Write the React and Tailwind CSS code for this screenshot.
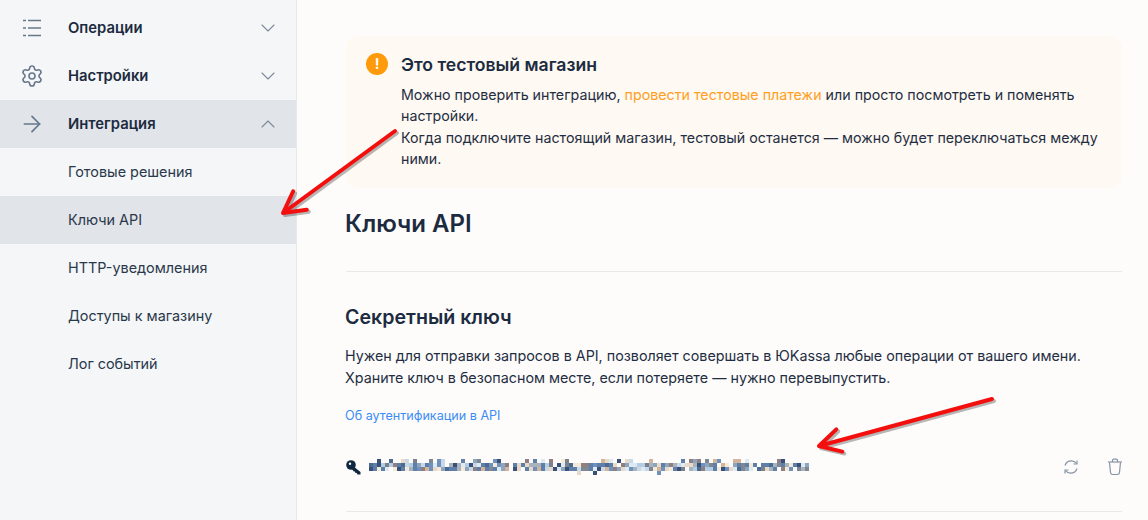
import React from "react";
import { ChevronDown, ChevronUp, Settings, ArrowRight } from "lucide-react";

function ListIcon() {
  return (
    <svg width="20" height="20" viewBox="0 0 20 20" fill="none" stroke="#68778d" strokeWidth="1.6" className="ml-[22px]">
      <path d="M1 2.500H4M1 10H4M1 17.500H4M6 2.500H19M6 10H19M6 17.500H19" />
    </svg>
  );
}

function NavRow({ icon, label, open, active }) {
  return (
    <div className={"flex h-12 items-center " + (active ? "bg-[#e1e4e8]" : "")}>
      <div className="flex w-[68px] shrink-0 items-center">{icon}</div>
      <span className="flex-1 text-[14.800px] font-semibold text-[#1c2b40]">{label}</span>
      {open ? (
        <ChevronUp size={24} strokeWidth={1.1} color="#7d8a9c" className="mr-[16px]" />
      ) : (
        <ChevronDown size={24} strokeWidth={1.1} color="#7d8a9c" className="mr-[16px]" />
      )}
    </div>
  );
}

function SubRow({ label, active }) {
  return (
    <div className={"flex h-12 items-center pl-[68px] text-[14.400px] text-[#2a384c] " + (active ? "bg-[#e1e4e8]" : "")}>
      {label}
    </div>
  );
}

function KeyBlur() {
  const palette = ["#5f7fa8", "#5f7fa8", "#8ea5c0", "#c9d8e6", "#e9d9c8", "#d4b59c", "#7c7f8c", "#4b6a94", "#b4cde2", "#dcebf3", "#f3ead9", "#8f7f80", "#3a5078", "#a9b3bd", "#6f91bd", "#7e8794"];
  const rects = [];
  let s = 12345;
  const next = () => {
    s ^= s << 13;
    s ^= s >>> 17;
    s ^= s << 5;
    s >>>= 0;
    return s / 4294967296;
  };
  for (let c = 0; c < 110; c++) {
    for (let r = 0; r < 4; r++) {
      const p = r === 1 || r === 2 ? 0.93 : r === 0 ? 0.36 : 0.05;
      const v = next();
      const col = palette[Math.floor(next() * palette.length)];
      if (v < p) rects.push(<rect key={c + "-" + r} x={c * 4} y={r * 4} width="4" height="4" fill={col} />);
    }
  }
  return (
    <svg width="440" height="16" viewBox="0 0 440 16" shapeRendering="crispEdges" className="ml-[8px]">
      {rects}
    </svg>
  );
}

function Arrow({ x1, y1, x2, y2 }) {
  const a = Math.atan2(y1 - y2, x1 - x2);
  const len = 24;
  const sp = 0.5;
  const p1 = [x2 + len * Math.cos(a + sp), y2 + len * Math.sin(a + sp)];
  const p2 = [x2 + len * Math.cos(a - sp), y2 + len * Math.sin(a - sp)];
  const d = `M${x1} ${y1}L${x2} ${y2}M${p1[0]} ${p1[1]}L${x2} ${y2}L${p2[0]} ${p2[1]}`;
  return (
    <g fill="none" strokeLinecap="round" strokeLinejoin="round" strokeWidth="4">
      <path d={d} stroke="#000" opacity="0.28" transform="translate(2 2)" />
      <path d={d} stroke="#f40f0f" />
    </g>
  );
}

export default function App() {
  return (
    <div className="relative flex h-[520px] w-[1148px] overflow-hidden bg-[#fdfcfb] font-['Inter',sans-serif]">
      <aside className="w-[297px] shrink-0 border-r border-[#e8e9eb] bg-[#f4f6f7] pt-1">
        <NavRow icon={<ListIcon />} label="Операции" />
        <NavRow icon={<Settings size={24} strokeWidth={1.6} color="#68778d" className="ml-[20px]" />} label="Настройки" />
        <NavRow active open icon={<ArrowRight size={26} strokeWidth={1.6} color="#68778d" className="ml-[19px]" />} label="Интеграция" />
        <SubRow label="Готовые решения" />
        <SubRow active label="Ключи API" />
        <SubRow label="HTTP-уведомления" />
        <SubRow label="Доступы к магазину" />
        <SubRow label="Лог событий" />
      </aside>
      <main className="flex-1 pl-[48px] pr-[26px] pt-9 text-[#1c2b40]">
        <div className="ml-px flex h-[152px] rounded-xl bg-[#fef9f2] pl-5 pt-[17px]">
          <div className="flex h-[22px] w-[22px] shrink-0 items-center justify-center rounded-full bg-[#ff9a0a] text-[14px] font-bold leading-none text-white">!</div>
          <div className="ml-[13px] w-[705px]">
            <div className="text-[17.600px] font-semibold leading-6">Это тестовый магазин</div>
            <div className="mt-[7px] text-[14.250px] leading-[21.330px] text-[#1f2e43]">
              Можно проверить интеграцию, <span className="text-[#ff9f1f]">провести тестовые платежи</span> или просто посмотреть и поменять настройки.
              <br />
              Когда подключите настоящий магазин, тестовый останется — можно будет переключаться между ними.
            </div>
          </div>
        </div>
        <h1 className="mt-[19px] text-[24px] font-semibold leading-[34px]">Ключи API</h1>
        <div className="ml-px mt-[30px] h-px bg-[#e9e9ea]" />
        <h2 className="mt-[33px] text-[19.600px] font-semibold leading-6">Секретный ключ</h2>
        <p className="mt-[16px] text-[14.300px] leading-[22px] text-[#1f2e43]">
          Нужен для отправки запросов в API, позволяет совершать в ЮKassa любые операции от вашего имени.
          <br />
          Храните ключ в безопасном месте, если потеряете — нужно перевыпустить.
        </p>
        <div className="mt-[17px] text-[12.600px] leading-5 text-[#3b8cf5]">Об аутентификации в API</div>
        <div className="ml-px mt-[33px] flex h-4 items-center">
          <svg width="15" height="15" viewBox="0 0 15 15" className="shrink-0">
            <circle cx="5" cy="5" r="4.800" fill="#0f2740" />
            <circle cx="4" cy="3.800" r="1.200" fill="#fdfcfb" />
            <path d="M7 6L14.500 12V14.500H11.500L10.800 13H9.500L9 11.500H7.800L5.500 8.500Z" fill="#0f2740" />
          </svg>
          <KeyBlur />
          <div className="flex-1" />
          <svg width="16" height="16" viewBox="0 0 16 16" fill="none" stroke="#8793a5" strokeWidth="1.200">
            <path d="M2 6.500C3 3.500 5.500 1.800 8.300 1.800C10.500 1.800 12.300 2.800 13.500 4.500" />
            <path d="M14 1.500V5H10.500" />
            <path d="M14 9.500C13 12.500 10.500 14.200 7.700 14.200C5.500 14.200 3.700 13.200 2.500 11.500" />
            <path d="M2 14.500V11H5.500" />
          </svg>
          <svg width="16" height="18" viewBox="0 0 16 18" fill="none" stroke="#8793a5" strokeWidth="1.200" className="ml-[28px] mr-[-1px]">
            <path d="M1 4H15" />
            <path d="M5.500 4V2.500C5.500 1.700 6 1.200 6.800 1.200H9.200C10 1.200 10.500 1.700 10.500 2.500V4" />
            <path d="M2.500 4.500L3.500 14.500C3.700 15.800 4.400 16.500 5.700 16.500H10.300C11.600 16.500 12.300 15.800 12.500 14.500L13.500 4.500" />
          </svg>
        </div>
        <div className="ml-px mt-[36px] h-px bg-[#e9e9ea]" />
      </main>
      <svg className="pointer-events-none absolute left-0 top-0" width="1148" height="520">
        <Arrow x1={395} y1={131} x2={283} y2={213} />
        <Arrow x1={992} y1={399} x2={819} y2={446} />
      </svg>
    </div>
  );
}
